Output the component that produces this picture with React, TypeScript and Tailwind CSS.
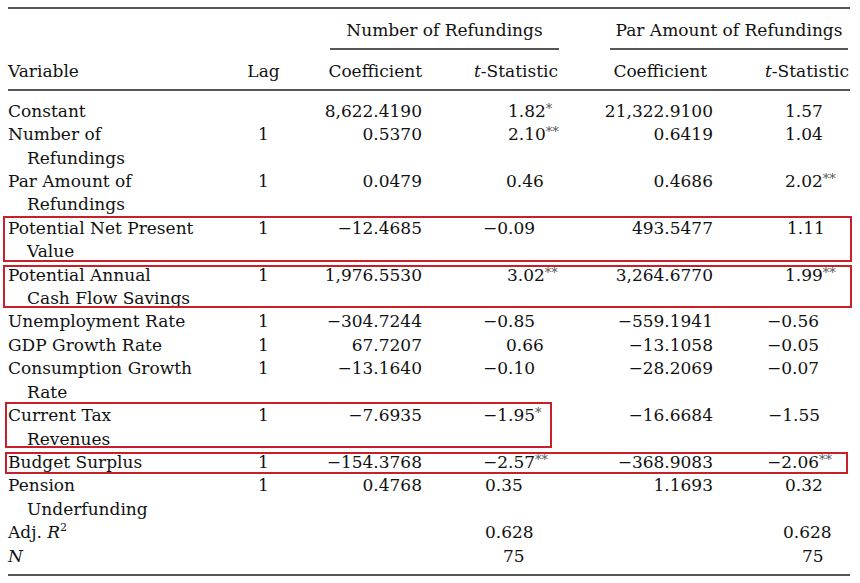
type Cell = { v: string; s?: string; pl: number };

type Row = {
  label: React.ReactNode[];
  lag?: string;
  c1?: string;
  t1?: Cell;
  c2?: string;
  t2?: Cell;
  box?: "full" | "half" | "thin" | "second";
};

const R = "\u2212";

const rows: Row[] = [
  { label: ["Constant"], c1: "8,622.4190", t1: { v: "1.82", s: "*", pl: 86 }, c2: "21,322.9100", t2: { v: "1.57", pl: 72 } },
  { label: ["Number of", "Refundings"], lag: "1", c1: "0.5370", t1: { v: "2.10", s: "**", pl: 86 }, c2: "0.6419", t2: { v: "1.04", pl: 72 } },
  { label: ["Par Amount of", "Refundings"], lag: "1", c1: "0.0479", t1: { v: "0.46", pl: 84 }, c2: "0.4686", t2: { v: "2.02", s: "**", pl: 72 } },
  { label: ["Potential Net Present", "Value"], lag: "1", c1: `${R}12.4685`, t1: { v: `${R}0.09`, pl: 61 }, c2: "493.5477", t2: { v: "1.11", pl: 74 }, box: "full" },
  { label: ["Potential Annual", "Cash Flow Savings"], lag: "1", c1: "1,976.5530", t1: { v: "3.02", s: "**", pl: 85 }, c2: "3,264.6770", t2: { v: "1.99", s: "**", pl: 72 }, box: "second" },
  { label: ["Unemployment Rate"], lag: "1", c1: `${R}304.7244`, t1: { v: `${R}0.85`, pl: 61 }, c2: `${R}559.1941`, t2: { v: `${R}0.56`, pl: 54 } },
  { label: ["GDP Growth Rate"], lag: "1", c1: "67.7207", t1: { v: "0.66", pl: 84 }, c2: `${R}13.1058`, t2: { v: `${R}0.05`, pl: 54 } },
  { label: ["Consumption Growth", "Rate"], lag: "1", c1: `${R}13.1640`, t1: { v: `${R}0.10`, pl: 61 }, c2: `${R}28.2069`, t2: { v: `${R}0.07`, pl: 54 } },
  { label: ["Current Tax", "Revenues"], lag: "1", c1: `${R}7.6935`, t1: { v: `${R}1.95`, s: "*", pl: 61 }, c2: `${R}16.6684`, t2: { v: `${R}1.55`, pl: 55 }, box: "half" },
  { label: ["Budget Surplus"], lag: "1", c1: `${R}154.3768`, t1: { v: `${R}2.57`, s: "**", pl: 61 }, c2: `${R}368.9083`, t2: { v: `${R}2.06`, s: "**", pl: 54 }, box: "thin" },
  { label: ["Pension", "Underfunding"], lag: "1", c1: "0.4768", t1: { v: "0.35", pl: 63 }, c2: "1.1693", t2: { v: "0.32", pl: 72 } },
  {
    label: [
      <span key="r">
        Adj. <span className="italic">R</span>
        <span className="text-[11px] leading-[0] align-[7px]">2</span>
      </span>,
    ],
    t1: { v: "0.628", pl: 63 },
    t2: { v: "0.628", pl: 70 },
  },
  { label: [<span key="n" className="italic">N</span>], t1: { v: "75", pl: 81 }, t2: { v: "75", pl: 89 } },
];

function Stat({ c }: { c?: Cell }) {
  if (!c) return <div />;
  return (
    <div className="whitespace-nowrap" style={{ paddingLeft: c.pl }}>
      {c.v}
      {c.s && <span className="text-[13px] leading-[0] text-[#555] align-[4px]">{c.s}</span>}
    </div>
  );
}

const grid = "grid grid-cols-[232px_47px_135px_138px_153px_137px]";

function Box({ kind }: { kind: Row["box"] }) {
  if (!kind) return null;
  const pos =
    kind === "full"
      ? "-top-[1px] bottom-[2px] -left-[5px] -right-[2px]"
      : kind === "second"
      ? "top-[1px] bottom-[2px] -left-[5px] -right-[2px]"
      : kind === "half"
      ? "-top-[2px] bottom-[3px] -left-[3px] right-[298px]"
      : "top-[1px] bottom-[0px] -left-[3px] right-[2px]";
  return <div className={`pointer-events-none absolute border-[2.5px] border-[#c8202a] ${pos}`} />;
}

export default function App() {
  return (
    <div className="w-[860px] h-[583px] bg-white text-[#111] overflow-hidden font-['DejaVu_Serif',serif] text-[17px] leading-[23.4px]">
      <div className="ml-[8px] w-[842px] pt-[7px]">
        <div className="border-t-2 border-[#555]">
          {/* spanning heads */}
          <div className={`${grid} pt-[10px]`}>
            <div />
            <div />
            <div className="col-span-2 ml-[43px] mr-[1px] border-b-2 border-[#555] pb-[6px] text-center">
              Number of Refundings
            </div>
            <div className="col-span-2 ml-[50px] mr-[2px] border-b-2 border-[#555] pb-[6px] text-center">
              Par Amount of Refundings
            </div>
          </div>
          <div className={`${grid} pt-[10px] pb-[5px] border-b-2 border-[#555]`}>
            <div>Variable</div>
            <div className="text-center">Lag</div>
            <div className="text-right">Coefficient</div>
            <div className="text-right pr-[2px]">
              <span className="italic">t</span>-Statistic
            </div>
            <div className="text-right pr-[6px]">Coefficient</div>
            <div className="text-right pr-[1px]">
              <span className="italic">t</span>-Statistic
            </div>
          </div>
        </div>

        <div className="pt-[9px] pb-[6px] border-b-2 border-[#555]">
          {rows.map((r, i) => (
            <div key={i} className={`${grid} relative`}>
              <Box kind={r.box} />
              <div>
                {r.label.map((l, j) => (
                  <div key={j} className={j > 0 ? "pl-[19px]" : ""}>
                    {l}
                  </div>
                ))}
              </div>
              <div className="text-center">{r.lag}</div>
              <div className="text-right">{r.c1}</div>
              <Stat c={r.t1} />
              <div className="text-right">{r.c2}</div>
              <Stat c={r.t2} />
            </div>
          ))}
        </div>
      </div>
    </div>
  );
}
